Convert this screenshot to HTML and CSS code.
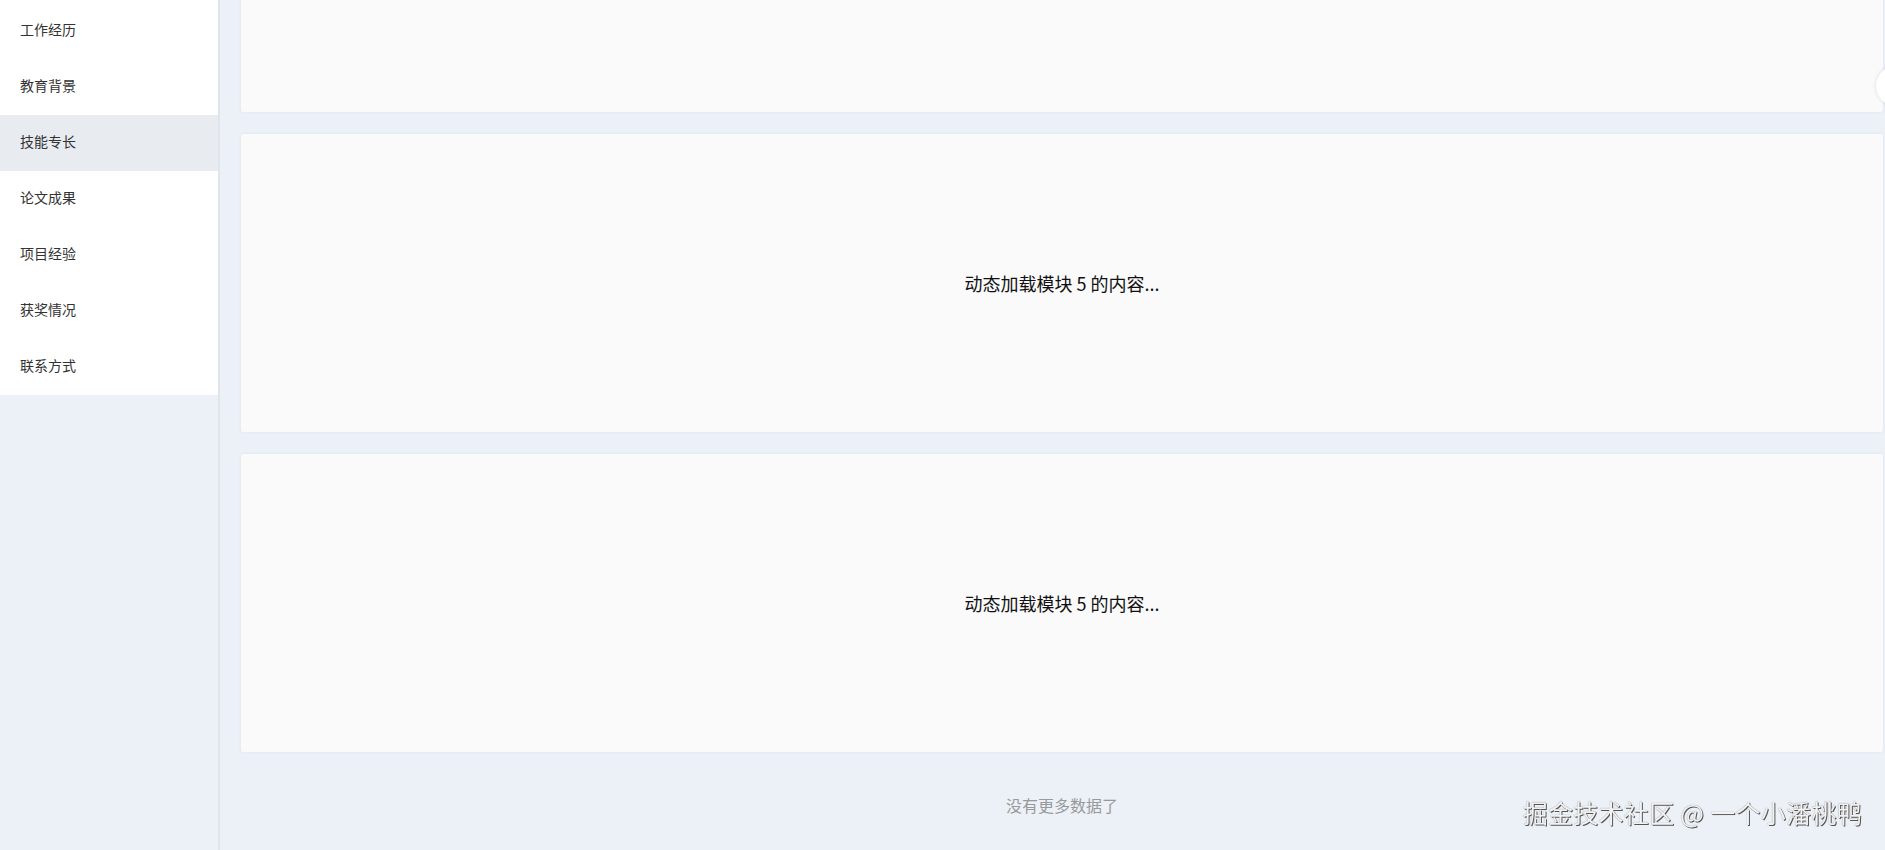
FILE: index.html
```html
<!DOCTYPE html>
<html lang="zh-CN">
<head>
  <meta charset="UTF-8" />
  <meta name="viewport" content="width=device-width, initial-scale=1.0" />
  <title>个人简历</title>
  <link rel="stylesheet" href="styles.css">
</head>
<body>
  <div class="layout">
    <aside class="sidebar">
      <ul class="menu">
        <li class="menu-item">工作经历</li>
        <li class="menu-item">教育背景</li>
        <li class="menu-item active">技能专长</li>
        <li class="menu-item">论文成果</li>
        <li class="menu-item">项目经验</li>
        <li class="menu-item">获奖情况</li>
        <li class="menu-item">联系方式</li>
      </ul>
    </aside>

    <main class="content">
      <div class="module-list">
        <!-- scrolled past: only the bottom of this one is visible -->
        <div class="module"></div>
        <div class="module">动态加载模块 5 的内容...</div>
        <div class="module">动态加载模块 5 的内容...</div>
      </div>
      <p class="no-more">没有更多数据了</p>
    </main>
  </div>

  <div class="float-btn"><span class="dot"></span></div>
  <div class="watermark">掘金技术社区 @ 一个小潘桃鸭</div>
</body>
</html>
```

FILE: styles.css
```css
* {
  box-sizing: border-box;
}

html,
body {
  margin: 0;
  height: 100%;
  overflow: hidden;
}

body {
  font-family: "Noto Sans CJK SC", "Noto Sans", sans-serif;
  background: #ecf1f8;
  color: #333;
}

.layout {
  display: flex;
  height: 100vh;
}

.sidebar {
  width: 220px;
  flex-shrink: 0;
  border-right: 2px solid #e0e5ec;
  background: #ecf1f8;
}

.menu {
  list-style: none;
  margin: 0;
  padding: 3px 0 0;
  background: #fff;
}

.menu-item {
  height: 56px;
  line-height: 52px;
  padding: 0 0 4px 20px;
  font-size: 14px;
  color: #333;
  cursor: pointer;
}

.menu-item.active {
  background: #e8ebf0;
}

.content {
  flex: 1;
  padding: 0 2px 0 21px;
  overflow: hidden;
}

.module-list {
  display: flex;
  flex-direction: column;
  gap: 22px;
  margin-top: -186px;
}

.module {
  height: 298px;
  display: flex;
  align-items: center;
  justify-content: center;
  background: #fafafa;
  border-radius: 2px;
  box-shadow: 0 0 2px rgba(200, 210, 225, 0.6);
  font-size: 18px;
  color: #111;
}

.no-more {
  margin: 0;
  padding: 42px 0 46px;
  line-height: 22px;
  text-align: center;
  font-size: 16px;
  color: #999;
}

.float-btn {
  position: fixed;
  left: 1876px;
  top: 66px;
  width: 40px;
  height: 40px;
  border-radius: 50%;
  background: #fff;
  box-shadow: 0 0 4px rgba(0, 0, 0, 0.12);
  display: flex;
  align-items: center;
  justify-content: center;
}

.float-btn .dot {
  width: 18px;
  height: 18px;
  border-radius: 50%;
  background: #e06a8f;
}

.watermark {
  position: fixed;
  right: 23px;
  bottom: 22px;
  font-size: 25px;
  line-height: 32px;
  letter-spacing: 0.3px;
  color: #f2f2f2;
  text-shadow: 1px 1px 0 #555, 0 0 1px #777;
  pointer-events: none;
}
```
